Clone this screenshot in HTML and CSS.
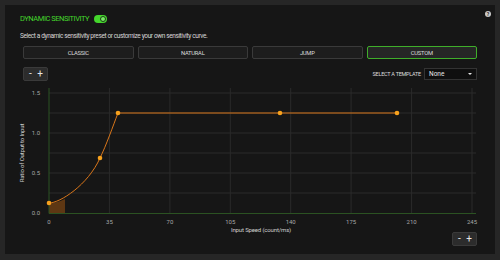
FILE: index.html
```html
<!DOCTYPE html>
<html lang="en">
<head>
  <meta charset="UTF-8">
  <meta name="viewport" content="width=device-width, initial-scale=1.0">
  <title>Dynamic Sensitivity</title>
  <link rel="stylesheet" href="styles.css">
</head>
<body>
  <div class="panel">
    <span class="info-icon">?</span>

    <div class="title-row">
      <span class="title">DYNAMIC SENSITIVITY</span>
      <span class="toggle"><span class="knob"></span></span>
    </div>

    <p class="desc">Select a dynamic sensitivity preset or customize your own sensitivity curve.</p>

    <div class="presets">
      <button class="preset">CLASSIC</button>
      <button class="preset">NATURAL</button>
      <button class="preset">JUMP</button>
      <button class="preset active">CUSTOM</button>
    </div>

    <div class="tools">
      <div class="zoom"><span>-</span><span>+</span></div>
      <div class="template">
        <label>SELECT A TEMPLATE</label>
        <div class="select"><span>None</span><span class="caret"></span></div>
      </div>
    </div>

    <svg class="chart" width="490" height="148" viewBox="0 0 490 148">
      <g transform="translate(-5,-84)">
        <!-- сетка -->
        <g class="grid">
          <line x1="49" y1="93" x2="476" y2="93"/>
          <line x1="49" y1="113" x2="476" y2="113"/>
          <line x1="49" y1="133" x2="476" y2="133"/>
          <line x1="49" y1="153" x2="476" y2="153"/>
          <line x1="49" y1="173" x2="476" y2="173"/>
          <line x1="49" y1="193" x2="476" y2="193"/>
          <line x1="109.4" y1="88" x2="109.4" y2="213"/>
          <line x1="169.9" y1="88" x2="169.9" y2="213"/>
          <line x1="230.3" y1="88" x2="230.3" y2="213"/>
          <line x1="290.7" y1="88" x2="290.7" y2="213"/>
          <line x1="351.1" y1="88" x2="351.1" y2="213"/>
          <line x1="411.6" y1="88" x2="411.6" y2="213"/>
          <line x1="472" y1="88" x2="472" y2="213"/>
        </g>

        <path class="area" d="M49,213 L49,203 Q57,203 65,199 L65,213 Z"/>

        <g class="axis">
          <line x1="49" y1="88" x2="49" y2="213.5"/>
          <line x1="49" y1="213.5" x2="476" y2="213.5"/>
        </g>

        <g class="ylabels">
          <text x="40" y="95">1.5</text>
          <text x="40" y="135">1.0</text>
          <text x="40" y="175">0.5</text>
          <text x="40" y="215">0.0</text>
        </g>
        <g class="xlabels">
          <text x="49" y="224">0</text>
          <text x="109.4" y="224">35</text>
          <text x="169.9" y="224">70</text>
          <text x="230.3" y="224">105</text>
          <text x="290.7" y="224">140</text>
          <text x="351.1" y="224">175</text>
          <text x="411.6" y="224">210</text>
          <text x="472" y="224">245</text>
        </g>
        <text class="axis-title" transform="translate(24,153) rotate(-90)">Ratio of Output to Input</text>
        <text class="axis-title" x="261" y="232">Input Speed (count/ms)</text>

        <path class="curve" d="M49,203 C60,203 88,185 100,158 C106,146 113,126 118,113 L397,113"/>
        <g class="points">
          <circle cx="49" cy="203" r="2.3"/>
          <circle cx="100" cy="158" r="2.3"/>
          <circle cx="118" cy="113" r="2.3"/>
          <circle cx="280" cy="113" r="2.3"/>
          <circle cx="397" cy="113" r="2.3"/>
        </g>
      </g>
    </svg>

    <div class="footer">
      <div class="zoom"><span>-</span><span>+</span></div>
    </div>
  </div>
</body>
</html>
```

FILE: styles.css
```css
body {
  margin: 0;
  padding: 5px;
  background-color: #262626;
  font-family: Roboto, "Liberation Sans", sans-serif;
}
.panel {
  position: relative;
  box-sizing: border-box;
  width: 490px;
  height: 249px;
  padding: 9px 18px 7px 15px;
  background-color: #161616;
}
.info-icon {
  position: absolute;
  top: 6px;
  right: 4px;
  width: 6px;
  height: 6px;
  border-radius: 50%;
  background-color: #c9c9c9;
  color: #161616;
  font-size: 5px;
  line-height: 6px;
  text-align: center;
  font-weight: bold;
}
.title-row {
  display: flex;
  align-items: center;
  gap: 5px;
  height: 10px;
}
.title {
  color: #44d62c;
  font-size: 7.5px;
  letter-spacing: -0.45px;
  line-height: 10px;
}
.toggle {
  display: flex;
  justify-content: flex-end;
  align-items: center;
  box-sizing: border-box;
  width: 13px;
  height: 8px;
  padding: 1px;
  border-radius: 4px;
  background-color: #44d62c;
}
.knob {
  box-sizing: border-box;
  width: 6px;
  height: 6px;
  border-radius: 50%;
  border: 1px solid #1c3f16;
  background-color: #7ae868;
}
.desc {
  margin: 7px 0 0;
  height: 10px;
  color: #d6d6d6;
  font-size: 6.5px;
  letter-spacing: -0.38px;
  line-height: 10px;
}
.presets {
  display: grid;
  grid-template-columns: repeat(4, 1fr);
  gap: 4px;
  margin: 5px 0 0 3px;
}
.preset {
  height: 13px;
  padding: 0;
  border: 1px solid #3a3a3a;
  border-radius: 2px;
  background-color: #1d1d1d;
  color: #dcdcdc;
  font-family: Roboto, "Liberation Sans", sans-serif;
  font-size: 5.8px;
  letter-spacing: -0.25px;
}
.preset.active {
  border-color: #3fae2a;
  background-color: #262626;
}
.tools {
  display: flex;
  justify-content: space-between;
  align-items: center;
  height: 14px;
  margin: 8px 0 0 3px;
}
.zoom {
  display: flex;
  justify-content: space-between;
  align-items: center;
  box-sizing: border-box;
  width: 25px;
  height: 14px;
  padding: 0 4px 0 5px;
  border: 1px solid #3a3a3a;
  border-radius: 2px;
  background-color: #2c2c2c;
  color: #e8e8e8;
  font-size: 10px;
  line-height: 12px;
}
.template {
  display: flex;
  align-items: center;
  gap: 3px;
}
.template label {
  color: #dcdcdc;
  font-size: 5.5px;
  letter-spacing: -0.25px;
}
.select {
  display: flex;
  justify-content: space-between;
  align-items: center;
  box-sizing: border-box;
  width: 53px;
  height: 12px;
  padding: 0 4px 0 4px;
  border: 1px solid #333;
  background-color: #0f0f0f;
  color: #e6e6e6;
  font-size: 6.5px;
}
.caret {
  width: 0;
  height: 0;
  border-left: 2px solid transparent;
  border-right: 2px solid transparent;
  border-top: 2px solid #e6e6e6;
}
.chart {
  display: block;
  margin: 3px 0 0 -15px;
  overflow: visible;
}
.grid line {
  stroke: #2a2a2a;
  stroke-width: 1;
}
.axis line {
  stroke: #2b5222;
  stroke-width: 1;
}
.area {
  fill: #5e3713;
}
.ylabels text {
  fill: #a6a6a6;
  font-size: 6px;
  text-anchor: end;
}
.xlabels text {
  fill: #a6a6a6;
  font-size: 6px;
  text-anchor: middle;
}
.axis-title {
  fill: #cfcfcf;
  font-size: 6px;
  text-anchor: middle;
  letter-spacing: -0.15px;
}
.curve {
  fill: none;
  stroke: #d9761a;
  stroke-width: 1;
}
.points circle {
  fill: #f7a11d;
}
.footer {
  display: flex;
  justify-content: flex-end;
  height: 15px;
}
```
